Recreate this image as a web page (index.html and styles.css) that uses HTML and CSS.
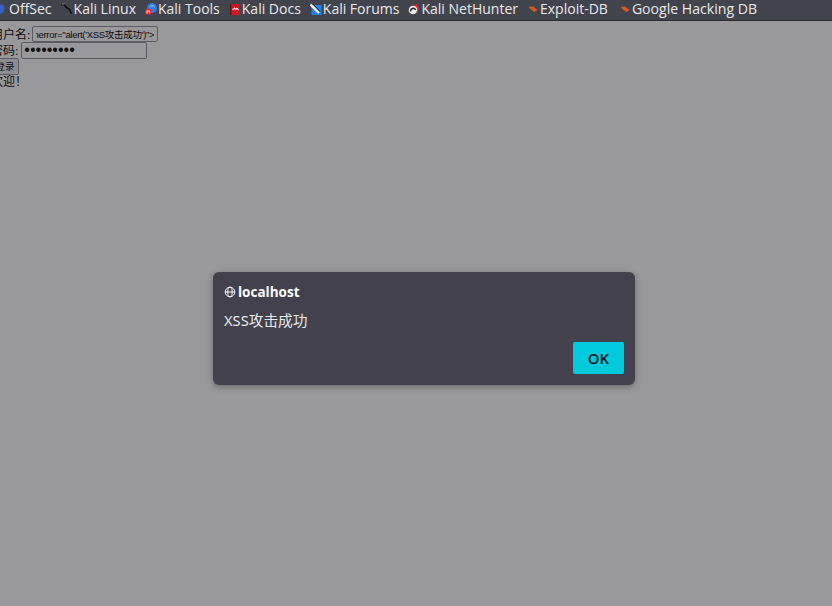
FILE: index.html
```html
<!DOCTYPE html>
<html lang="zh">
<head>
<meta charset="utf-8">
<title>localhost</title>
<link rel="stylesheet" href="styles.css">
</head>
<body>
<nav class="bar">
  <a class="mark"><svg class="ico" viewBox="0 0 12 12"><circle cx="3.500" cy="6" r="5" fill="#3b5fc0"/><circle cx="0" cy="6" r="3.500" fill="#6a3f8f"/></svg><span>OffSec</span></a>
  <a class="mark"><svg class="ico" viewBox="0 0 12 12"><path d="M0.500 2 C2.500 1 4 2 5 4 C6 5.500 7.500 5 8.500 6.500 C9.500 8 9 9.500 11 10.500" fill="none" stroke="#0c0c0e" stroke-width="1.500"/><path d="M1 1.200 L3.500 .8" stroke="#bbb" stroke-width=".7"/></svg><span>Kali Linux</span></a>
  <a class="mark"><svg class="ico" viewBox="0 0 12 12"><circle cx="7" cy="5" r="5" fill="#2f7fe0"/><path d="M4.500 4 A3 3 0 0 1 9.500 4" fill="none" stroke="#a9c8f0" stroke-width="1"/><rect x=".500" y="6" width="5.500" height="5.500" rx="1" fill="#e5292b"/><path d="M2 10.500 V8 H4.500 V10.500" fill="none" stroke="#fff" stroke-width=".8"/></svg><span>Kali Tools</span></a>
  <a class="mark"><svg class="ico" viewBox="0 0 12 12"><rect x="1" y="1" width="10" height="11" rx=".6" fill="#d3141c"/><rect x="1" y="1" width="1.500" height="11" fill="#5a1a22"/><path d="M3.500 7 L5.300 5 L6.500 6.500 L7.800 5.200 L9.500 7" fill="none" stroke="#fff" stroke-width="1.100"/></svg><span>Kali Docs</span></a>
  <a class="mark"><svg class="ico" viewBox="0 0 12 12"><rect x="1.500" y="2" width="10" height="10" fill="#2180ea"/><path d="M.5 1.500 L9 10" stroke="#f2f2f2" stroke-width="2.400"/><path d="M3 .8 L10 8.500" stroke="#1b2438" stroke-width="1"/></svg><span>Kali Forums</span></a>
  <a class="mark"><svg class="ico" viewBox="0 0 12 12"><path d="M5 2 L9 1 L11.500 6 L8 8 Z" fill="#e0232c"/><circle cx="5" cy="7" r="4.300" fill="#ececec"/><path d="M3 8.500 A2.300 2.300 0 0 1 7.500 7" fill="none" stroke="#2e2e35" stroke-width="1.500"/><path d="M9 8 L10 10.500" stroke="#d5202a" stroke-width="1.200"/></svg><span>Kali NetHunter</span></a>
  <a class="mark"><svg class="ico" viewBox="0 0 12 12"><path d="M1.500 4 L6 3.500 L10.500 7 L7.500 9 L4.500 7 Z" fill="#d9591f"/></svg><span>Exploit-DB</span></a>
  <a class="mark last"><svg class="ico" viewBox="0 0 12 12"><path d="M1.500 4 L6 3.500 L10.500 7 L7.500 9 L4.500 7 Z" fill="#d9591f"/></svg><span>Google Hacking DB</span></a>
</nav>
<main class="page">
  <form class="login">
    <div class="row"><label>用户名:</label> <input class="user" type="text" value="&#x200E;onerror=&quot;alert('XSS攻击成功')&quot;&gt;&#x200E;"></div>
    <div class="row"><label>密码:</label> <input class="pass" type="password" value="123456789"></div>
    <div class="row"><button class="submit" type="button">登录</button></div>
    <div class="row welcome">欢迎！</div>
  </form>
</main>
<div class="scrim">
  <div class="dialog">
    <div class="origin"><svg class="globe" viewBox="0 0 12 12"><g fill="none" stroke="#fbfbfe" stroke-width="1"><circle cx="6" cy="6" r="4.800"/><ellipse cx="6" cy="6" rx="2.200" ry="4.800"/><path d="M1.200 6 H10.800"/></g></svg><span>localhost</span></div>
    <p class="msg">XSS攻击成功</p>
    <div class="actions"><button class="ok" type="button">OK</button></div>
  </div>
</div>
</body>
</html>
```
FILE: styles.css
```css
* { box-sizing: border-box; }
html, body { margin: 0; height: 100%; }
body {
  width: 832px; height: 606px; overflow: hidden; position: relative;
  background: #fff; font-family: "Liberation Serif", "Noto Sans CJK SC", serif;
  display: flex; flex-direction: column;
}
.bar {
  height: 21px; flex: none; background: #42444d; border-bottom: 1px solid #2b2c33;
  display: flex; align-items: center; gap: 9px; padding: 0 0 3px 0; margin-left: -4px;
  color: #e8e8ea; font: 14px "Open Sans", "Noto Sans", sans-serif;
}
.mark { display: flex; align-items: center; gap: 1px; white-space: nowrap; }
.last { margin-left: 2px; font-size: 14.1px; }
.ico { width: 12px; height: 12px; flex: none; }
.page { padding: 5px 0 0 0; margin-left: -9px; font-size: 12px; color: #000; }
.row { height: 16px; display: flex; align-items: center; gap: 2px; white-space: nowrap; }
.welcome { height: 14px; }
.user { width: 126px; height: 16px; font: 9.500px "Liberation Sans", "Noto Sans CJK SC", sans-serif; letter-spacing: -.3px; padding: 0 3px; border: 1px solid #8f8f9d; border-radius: 2px; direction: rtl; background: #fff; }
.pass { width: 126px; height: 17px; margin-left: 1px; font: 16px "Liberation Sans", sans-serif; padding: 0 2px; border: 1px solid #8f8f9d; border-radius: 2px; background: #fff; }
.submit { width: 28px; height: 17px; font: 9.500px "Noto Sans CJK SC", sans-serif; padding: 0; border: 1px solid #8f8f9d; border-radius: 2px; background: #e9e9ed; }
.scrim {
  position: absolute; left: 0; top: 21px; width: 832px; height: 585px;
  background: rgba(28, 27, 34, .45);
}
.dialog {
  position: absolute; left: 213px; top: 251px; width: 422px; height: 113px;
  background: #42414d; border-radius: 6px; box-shadow: 0 2px 6px rgba(0,0,0,.3);
  padding: 11px; color: #fbfbfe;
  font-family: "Open Sans", "Noto Sans", "Noto Sans CJK SC", sans-serif;
  display: flex; flex-direction: column;
}
.origin { display: flex; align-items: center; gap: 2px; font-size: 13.500px; font-weight: 700; line-height: 18px; }
.globe { width: 12px; height: 12px; }
.msg { margin: 9px 0 0; font-size: 14.700px; line-height: 20px; font-family: "Noto Sans", "Noto Sans CJK SC", sans-serif; color: #e8e8ec; }
.actions { margin-top: auto; display: flex; justify-content: flex-end; }
.ok {
  width: 51px; height: 32px; border: 0; border-radius: 2px; background: #00cadb; color: #15141a;
  font: 600 15px "Open Sans", "Noto Sans", sans-serif; padding: 0;
}
```
